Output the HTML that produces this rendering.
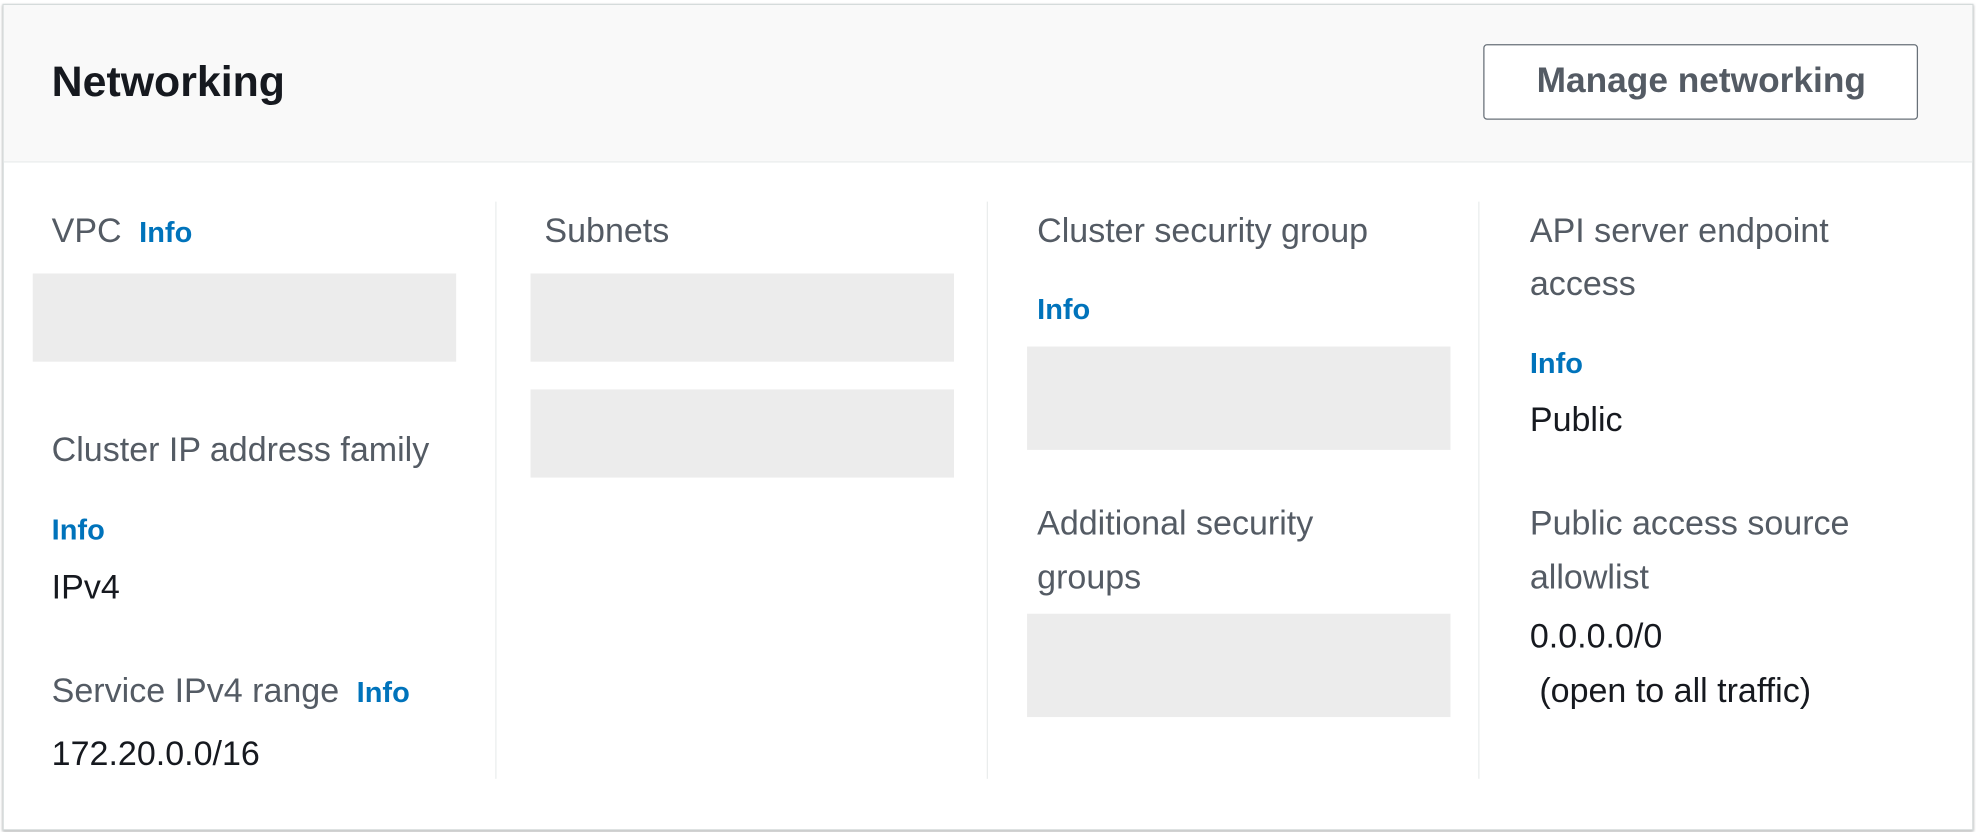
<!DOCTYPE html>
<html><head><style>
html,body{margin:0;padding:0;background:#fff;width:1976px;height:832px;overflow:hidden}
#w{position:absolute;left:0;top:0;width:1568px;height:660px;transform:scale(1.2602);transform-origin:0 0;font-family:"Liberation Sans",sans-serif}
.card{position:absolute;left:2px;top:3px;width:1562px;height:654px;border:1px solid #d5dbdb;box-shadow:0 1px 2px rgba(0,0,0,.35);background:#fff}
.hd{position:absolute;left:0;top:0;width:1562px;height:124px;background:#f9f9f9;border-bottom:1px solid #eaeded}
.t{position:absolute;white-space:nowrap;line-height:30px;font-size:27px;color:#545b64}
.v{color:#16191f}
.i{color:#0073bb;font-weight:bold;font-size:23px}
.box{position:absolute;background:#ececec}
.div{position:absolute;top:160px;height:458px;width:1px;background:#eaeded}
</style></head><body><div id="w">
<div class="card"><div class="hd"></div></div>
<div class="t v" style="left:41px;top:47px;font-size:34px;font-weight:bold;line-height:36px">Networking</div>
<div style="position:absolute;left:1177px;top:35px;width:343px;height:58px;border:1.5px solid #687078;border-radius:3px;background:#fff"></div>
<div class="t" style="left:1177px;width:346px;text-align:center;top:49px;font-weight:bold;font-size:28px">Manage networking</div>
<div class="div" style="left:393px"></div><div class="div" style="left:783px"></div><div class="div" style="left:1173px"></div>

<div class="t" style="left:41px;top:168px">VPC <span class="i">&nbsp;Info</span></div>
<div class="box" style="left:26px;top:217px;width:336px;height:70px"></div>
<div class="t" style="left:41px;top:342px">Cluster IP address family</div>
<div class="t i" style="left:41px;top:405px">Info</div>
<div class="t v" style="left:41px;top:451px">IPv4</div>
<div class="t" style="left:41px;top:533px">Service IPv4 range <span class="i">&nbsp;Info</span></div>
<div class="t v" style="left:41px;top:583px">172.20.0.0/16</div>

<div class="t" style="left:432px;top:168px">Subnets</div>
<div class="box" style="left:421px;top:217px;width:336px;height:70px"></div>
<div class="box" style="left:421px;top:309px;width:336px;height:70px"></div>

<div class="t" style="left:823px;top:168px">Cluster security group</div>
<div class="t i" style="left:823px;top:230px">Info</div>
<div class="box" style="left:815px;top:275px;width:336px;height:82px"></div>
<div class="t" style="left:823px;top:400px">Additional security</div>
<div class="t" style="left:823px;top:443px">groups</div>
<div class="box" style="left:815px;top:487px;width:336px;height:82px"></div>

<div class="t" style="left:1214px;top:168px">API server endpoint</div>
<div class="t" style="left:1214px;top:210px">access</div>
<div class="t i" style="left:1214px;top:273px">Info</div>
<div class="t v" style="left:1214px;top:318px">Public</div>
<div class="t" style="left:1214px;top:400px">Public access source</div>
<div class="t" style="left:1214px;top:443px">allowlist</div>
<div class="t v" style="left:1214px;top:490px">0.0.0.0/0</div>
<div class="t v" style="left:1214px;top:533px">&nbsp;(open to all traffic)</div>
</div></body></html>
